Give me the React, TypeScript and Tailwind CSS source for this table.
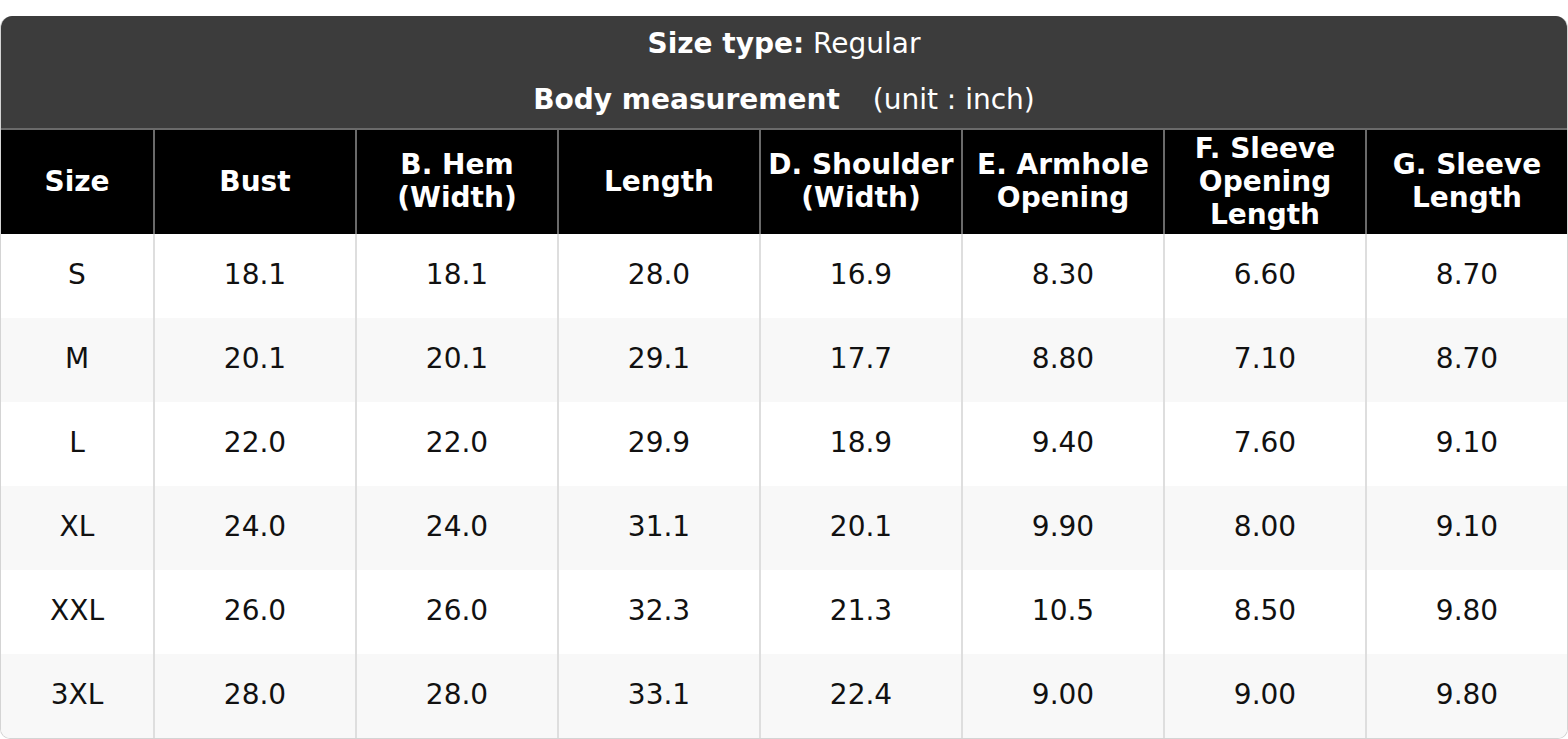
import React from 'react'

const columns = [
  ['Size'],
  ['Bust'],
  ['B. Hem', '(Width)'],
  ['Length'],
  ['D. Shoulder', '(Width)'],
  ['E. Armhole', 'Opening'],
  ['F. Sleeve', 'Opening', 'Length'],
  ['G. Sleeve', 'Length'],
]

const rows = [
  ['S', '18.1', '18.1', '28.0', '16.9', '8.30', '6.60', '8.70'],
  ['M', '20.1', '20.1', '29.1', '17.7', '8.80', '7.10', '8.70'],
  ['L', '22.0', '22.0', '29.9', '18.9', '9.40', '7.60', '9.10'],
  ['XL', '24.0', '24.0', '31.1', '20.1', '9.90', '8.00', '9.10'],
  ['XXL', '26.0', '26.0', '32.3', '21.3', '10.5', '8.50', '9.80'],
  ['3XL', '28.0', '28.0', '33.1', '22.4', '9.00', '9.00', '9.80'],
]

const App = () => {
  return (
    <div
      className="w-[1568px] h-[739px] bg-white pt-[16px]"
      style={{ fontFamily: '"DejaVu Sans", "Liberation Sans", sans-serif' }}
    >
      <div className="overflow-hidden rounded-t-[12px] rounded-b-[10px] border-x border-b border-[#d4d4d4]">
        {/* title block */}
        <div className="bg-[#3c3c3c] text-white text-[28px]">
          <div className="h-[56px] flex items-center justify-center">
            <span className="font-bold">Size type:</span>
            <span>&nbsp;Regular</span>
          </div>
          <div className="h-[56px] flex items-center justify-center">
            <span className="font-bold">Body measurement</span>
            <span className="ml-[33px]">(unit : inch)</span>
          </div>
        </div>

        {/* column headers */}
        <div className="grid grid-cols-[152px_repeat(7,minmax(0,1fr))] bg-black border-t-2 border-[#6a6a6a]">
          {columns.map((lines, i) => (
            <div
              key={i}
              className={
                'h-[104px] pb-[2px] flex flex-col items-center justify-center text-white font-bold text-[28px] leading-[33px] text-center ' +
                (i > 0 ? 'border-l-2 border-[#6a6a6a]' : '')
              }
            >
              {lines.map((l) => (
                <span key={l} className="whitespace-nowrap">
                  {l}
                </span>
              ))}
            </div>
          ))}
        </div>

        {/* data rows */}
        {rows.map((row, r) => (
          <div
            key={row[0]}
            className={
              'grid grid-cols-[152px_repeat(7,minmax(0,1fr))] ' +
              (r % 2 === 1 ? 'bg-[#f8f8f8]' : 'bg-white')
            }
          >
            {row.map((cell, i) => (
              <div
                key={i}
                className={
                  'h-[84px] pb-[2px] flex items-center justify-center text-[28px] text-[#111]' +
                  (i > 0 ? ' border-l-2 border-[#dedede]' : '')
                }
              >
                {cell}
              </div>
            ))}
          </div>
        ))}
      </div>
    </div>
  )
}

export default App
